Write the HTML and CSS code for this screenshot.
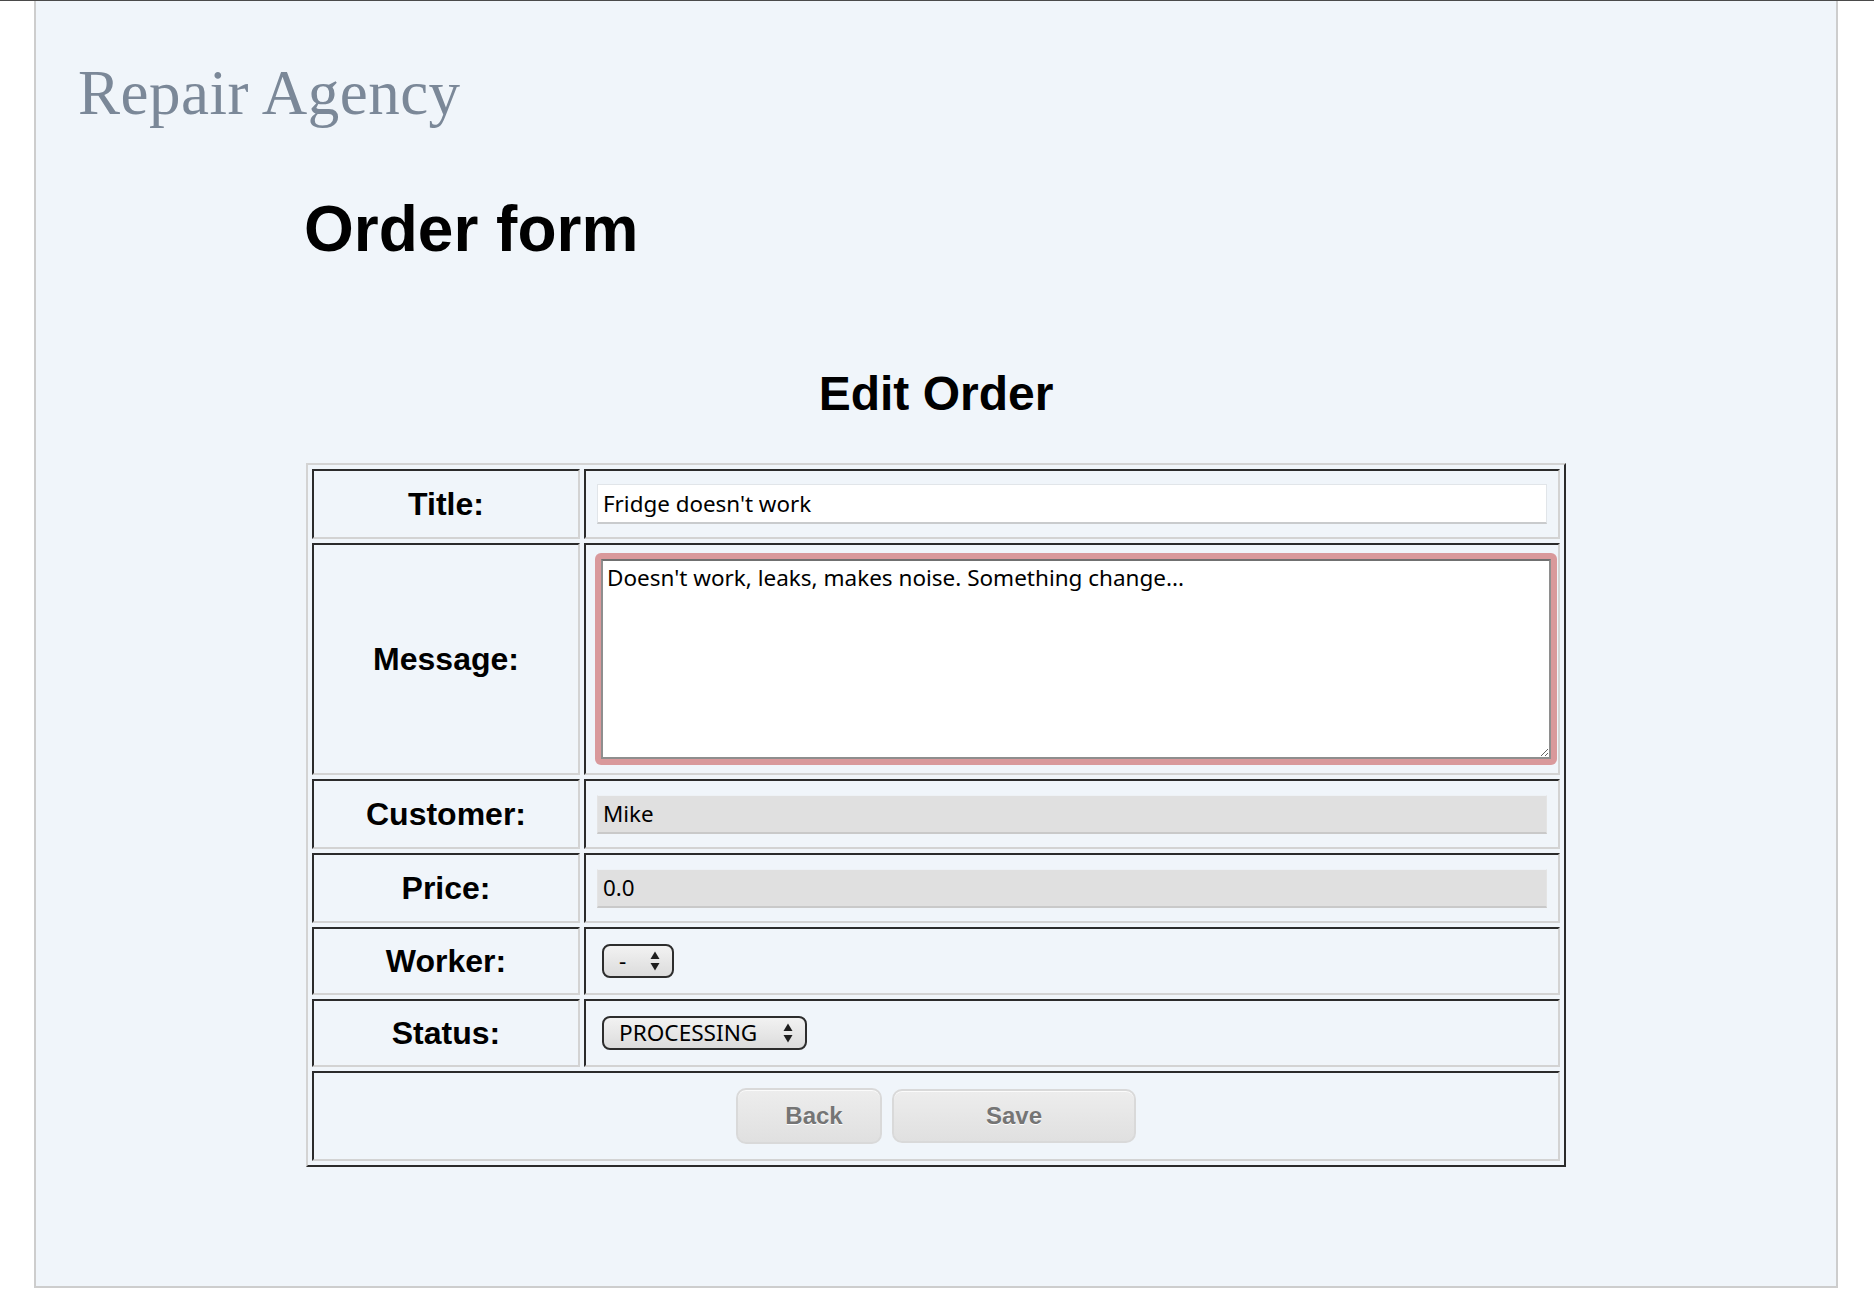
FILE: index.html
```html
<!DOCTYPE html>
<html lang="en">
<head>
<meta charset="utf-8">
<title>Order form</title>
<link rel="stylesheet" href="styles.css">
</head>
<body>
<div class="page">
  <header class="brand">Repair Agency</header>
  <main class="main">
    <h1 class="title">Order form</h1>
    <h2 class="subtitle">Edit Order</h2>
    <form class="form">
      <table class="order">
        <tr class="r70">
          <th>Title:</th>
          <td><input class="field" type="text" value="Fridge doesn't work"></td>
        </tr>
        <tr class="r232">
          <th>Message:</th>
          <td><div class="ring"><textarea class="area">Doesn't work, leaks, makes noise. Something change...</textarea></div></td>
        </tr>
        <tr class="r70">
          <th>Customer:</th>
          <td><input class="field field-ro" type="text" value="Mike" readonly></td>
        </tr>
        <tr class="r70">
          <th>Price:</th>
          <td><input class="field field-ro" type="text" value="0.0" readonly></td>
        </tr>
        <tr class="r68">
          <th>Worker:</th>
          <td>
            <span class="select-wrap">
              <select class="select select-worker"><option>-</option></select>
              <svg class="arrows" width="10" height="20" viewBox="0 0 10 20"><polygon points="0.5,8 9.5,8 5,0.5"/><polygon points="0.5,12 9.5,12 5,19.5"/></svg>
            </span>
          </td>
        </tr>
        <tr class="r68">
          <th>Status:</th>
          <td>
            <span class="select-wrap">
              <select class="select select-status"><option>PROCESSING</option></select>
              <svg class="arrows" width="10" height="20" viewBox="0 0 10 20"><polygon points="0.5,8 9.5,8 5,0.5"/><polygon points="0.5,12 9.5,12 5,19.5"/></svg>
            </span>
          </td>
        </tr>
        <tr class="r90">
          <td class="actions" colspan="2">
            <div class="buttons">
              <button type="button" class="btn btn-back">Back</button>
              <button type="button" class="btn btn-save">Save</button>
            </div>
          </td>
        </tr>
      </table>
    </form>
  </main>
</div>
</body>
</html>
```
FILE: styles.css
```css
html, body {
  margin: 0;
  padding: 0;
  background: #ffffff;
}

body {
  border-top: 1px solid #4a4a4a;
  font-family: "Liberation Sans", Arial, sans-serif;
  color: #000;
}

.page {
  margin-left: 34px;
  width: 1800px;
  background: #f0f5fa;
  border-left: 2px solid #cdcdcd;
  border-right: 2px solid #cdcdcd;
  border-bottom: 2px solid #cdcdcd;
  padding-top: 61px;
  padding-bottom: 119px;
}

.brand {
  margin: 0 0 0 42px;
  font-family: "Liberation Serif", "Times New Roman", serif;
  font-size: 63px;
  line-height: 63px;
  color: #7b8898;
  letter-spacing: 0.5px;
}

.main {
  width: 1260px;
  margin: 0 auto;
}

.title {
  margin: 72px 0 0 -2px;
  font-size: 64px;
  line-height: 64px;
  font-weight: bold;
}

.subtitle {
  margin: 109px 0 0 0;
  font-size: 48px;
  line-height: 48px;
  font-weight: bold;
  text-align: center;
}

.form {
  margin: 45px 0 0 0;
}

.order {
  width: 100%;
  border-collapse: separate;
  border-spacing: 4px;
  border: 2px solid;
  border-color: #d3d3d3 #2b2b2b #2b2b2b #d3d3d3;
}

.order th,
.order td {
  border: 2px solid;
  border-color: #2b2b2b #d3d3d3 #d3d3d3 #2b2b2b;
  padding: 0;
  vertical-align: middle;
}

.order th {
  width: 264px;
  font-size: 32px;
  font-weight: bold;
  text-align: center;
}

.order td {
  padding-left: 11px;
}

.r70 { height: 70px; }
.r232 { height: 232px; }
.r68 { height: 68px; }
.r90 { height: 90px; }

.field {
  display: block;
  box-sizing: border-box;
  width: 950px;
  height: 40px;
  margin: 0;
  padding: 0 5px;
  border: 1px solid #e1e5e9;
  border-bottom: 2px solid #c9cbcd;
  background: #ffffff;
  font-family: "Noto Sans", sans-serif;
  font-size: 22.4px;
  color: #000;
  outline: none;
}

.field-ro {
  height: 39px;
  background: #e0e0e0;
  border-color: #eef2f6 #e4e4e4 #c9c9c9 #e4e4e4;
}

.ring {
  width: 950px;
  margin-left: -2px;
  padding: 6px;
  background: #d9999b;
  border-radius: 6px;
}

.area {
  display: block;
  box-sizing: border-box;
  width: 950px;
  height: 200px;
  margin: 0;
  padding: 1px 4px;
  border: 2px solid #8e8e8e;
  border-top-color: #707070;
  background: #ffffff;
  font-family: "Noto Sans", sans-serif;
  font-size: 22.5px;
  color: #000;
  outline: none;
  resize: both;
}

.select-wrap {
  position: relative;
  display: inline-block;
  margin-left: 5px;
  vertical-align: middle;
}

.select {
  -webkit-appearance: none;
  appearance: none;
  display: block;
  box-sizing: border-box;
  height: 34px;
  margin: 0;
  padding: 0 30px 0 15px;
  border: 2px solid #2d2d2d;
  border-radius: 8px;
  background: linear-gradient(#f2f2f2, #dcdcdc);
  font-family: "Noto Sans", sans-serif;
  font-size: 22.6px;
  line-height: 30px;
  color: #000;
  outline: none;
}

.select-worker { width: 72px; }
.select-status { width: 205px; }

.arrows {
  position: absolute;
  right: 14px;
  top: 7px;
  fill: #1e1e1e;
  pointer-events: none;
}

.order td.actions {
  padding: 0;
}

.buttons {
  display: flex;
  justify-content: center;
  align-items: center;
  gap: 10px;
}

.btn {
  box-sizing: border-box;
  margin: 0;
  padding: 0;
  font-family: "Liberation Sans", Arial, sans-serif;
  font-size: 24px;
  font-weight: bold;
  color: #757575;
  text-shadow: 0 1px 0 #ffffff;
  background: linear-gradient(#ededed, #e0e0e0);
  border: 2px solid #d9d9d9;
  border-radius: 10px;
  box-shadow: inset 0 1px 0 #fbfbfb;
}

.btn-back {
  width: 146px;
  height: 56px;
  padding-left: 10px;
}

.btn-save {
  width: 244px;
  height: 54px;
}
```
